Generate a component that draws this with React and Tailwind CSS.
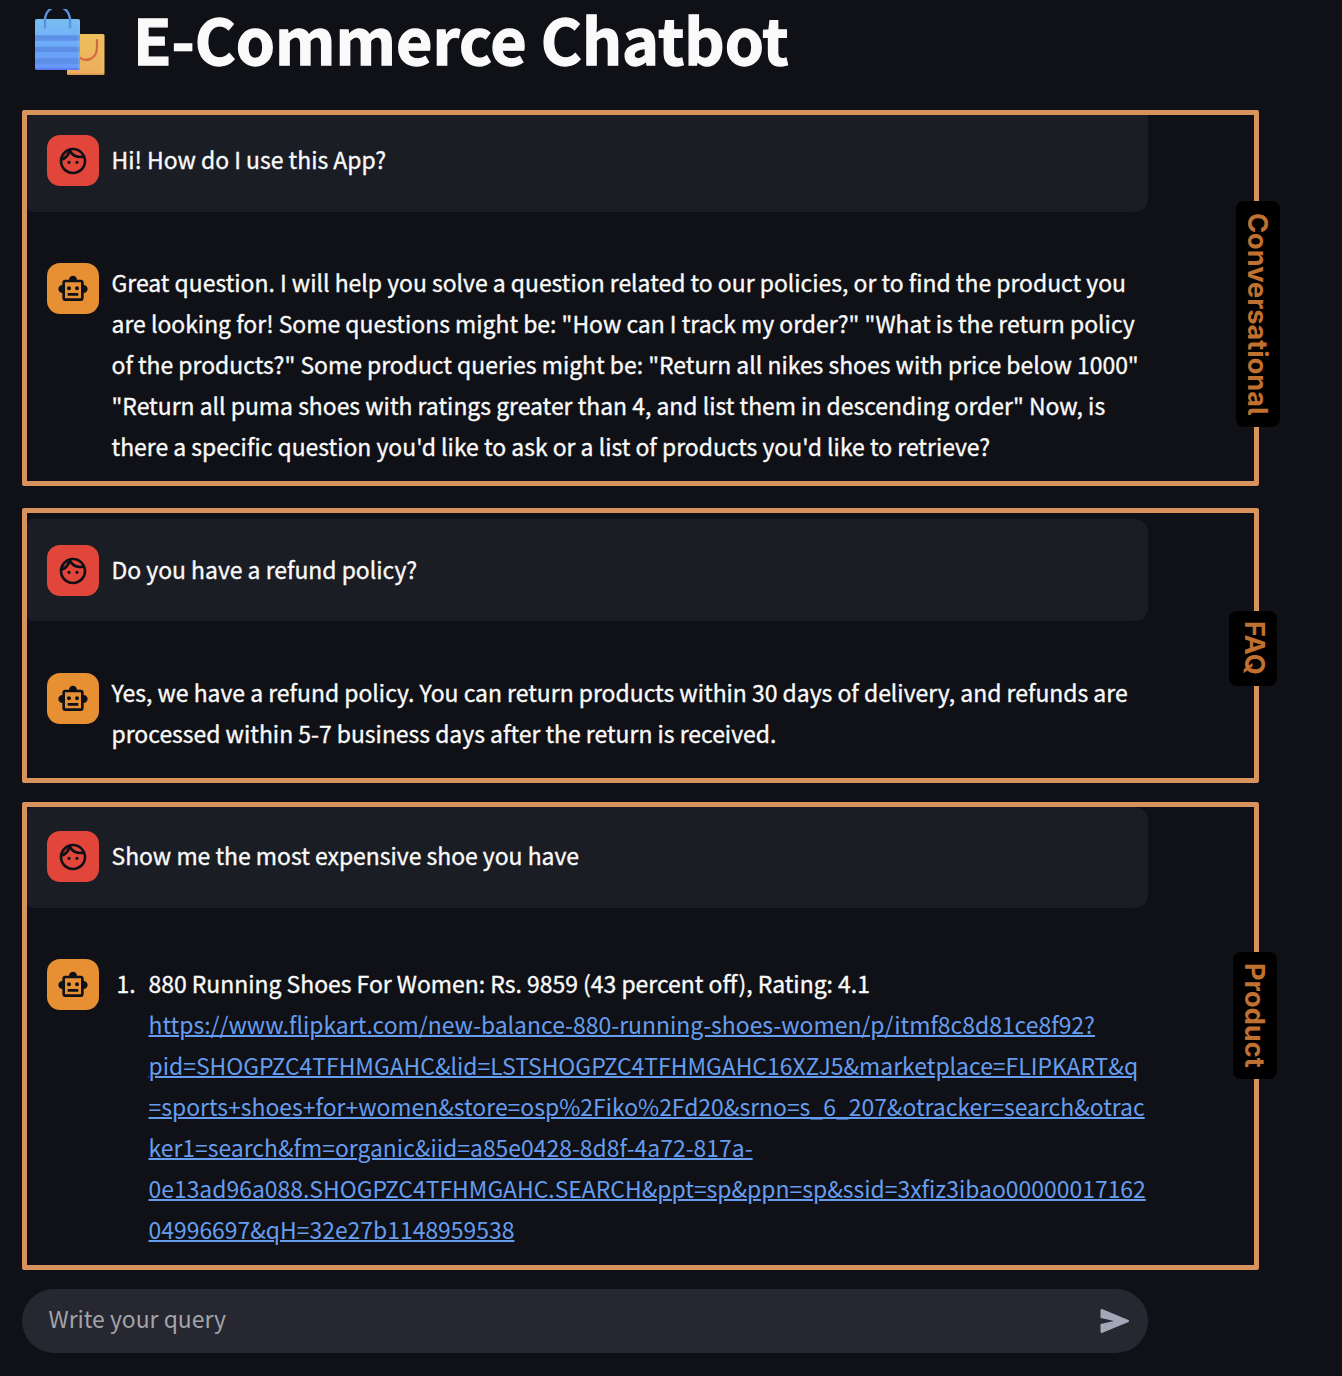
import { MdOutlineFace, MdOutlineSmartToy } from "react-icons/md";

function Line({ children }) {
  return <span className="block h-[41px] whitespace-nowrap">{children}</span>;
}

function Avatar({ bot }) {
  return (
    <div
      className={
        "flex h-[51px] w-[52px] shrink-0 items-center justify-center rounded-[13px] text-[#0e1117] " +
        (bot ? "bg-[#e78f33]" : "bg-[#e24539]")
      }
    >
      {bot ? <MdOutlineSmartToy size={32} /> : <MdOutlineFace size={32} />}
    </div>
  );
}

function UserMessage({ children, className }) {
  return (
    <div className={"flex w-[1121px] gap-[12.500px] bg-[#1a1d24] pl-5 " + className}>
      <Avatar />
      <div className="pt-1 [-webkit-text-stroke:0.35px_#fafafa]">{children}</div>
    </div>
  );
}

function BotMessage({ children, className }) {
  return (
    <div className={"flex gap-[12.500px] pl-5 " + className}>
      <Avatar bot />
      <div className="-mt-px [-webkit-text-stroke:0.35px_#fafafa]">{children}</div>
    </div>
  );
}

function Section({ label, className, labelClass, children }) {
  return (
    <section className={"relative ml-[22px] w-[1237px] rounded-[2px] border-[5px] border-[#d7935b] " + className}>
      {children}
      <div
        className={
          "absolute flex items-center justify-center rounded-lg bg-black font-['Inter'] leading-none font-bold text-[#c1712f] [font-feature-settings:'cv05'] [writing-mode:vertical-rl] " +
          labelClass
        }
      >
        {label}
      </div>
    </section>
  );
}

function Bags() {
  return (
    <svg width="72" height="68" viewBox="0 0 72 68" className="mt-[9px] ml-[34px] shrink-0">
      <defs>
        <linearGradient id="blue" x1="0" y1="0" x2="0" y2="1">
          <stop offset="0" stopColor="#77bdf0" />
          <stop offset=".4" stopColor="#70b0f8" />
          <stop offset="1" stopColor="#6595fa" />
        </linearGradient>
        <linearGradient id="gold" x1="0" y1="0" x2="0" y2="1">
          <stop offset="0" stopColor="#edc05b" />
          <stop offset="1" stopColor="#ecad5d" />
        </linearGradient>
      </defs>
      <rect x="33" y="25" width="37.5" height="41" rx="1.5" fill="url(#gold)" />
      <path d="M68.5 27V64" stroke="#f1ba66" strokeWidth="2" />
      <path d="M34 65.2H70" stroke="#d6954f" strokeWidth="1.2" />
      <path d="M63 31v7c0 14-13 15-18 10" fill="none" stroke="#d36744" strokeWidth="2.2" strokeLinecap="round" />
      <rect x="1" y="10" width="45" height="51" rx="1.8" fill="url(#blue)" />
      <path d="M1 29H46M1 40.5H46M1 52H46" stroke="#5d8fe6" strokeWidth="5.5" />
      <path d="M2 60H45" stroke="#5877ed" strokeWidth="1.6" />
      <path d="M44.8 12V59" stroke="#8bbdf8" strokeWidth="1.4" opacity=".6" />
      <path d="M11 18.500V10Q12 2 18 -1M36 18.500V10Q35 2 29 -1" fill="none" stroke="#5b94dc" strokeWidth="2.400" strokeLinecap="round" />
    </svg>
  );
}

export default function App() {
  return (
    <main className="h-[1376px] w-[1342px] bg-[#0f1116] font-['Noto_Sans_CJK_SC',sans-serif] text-[22.930px] leading-[41px] text-[#fafafa]">
      <header className="flex h-[110px]">
        <Bags />
        <h1 className="ml-[27px] text-[62.700px] leading-[75px] font-bold whitespace-nowrap [-webkit-text-stroke:1.3px_#fafafa]">
          E-Commerce Chatbot
        </h1>
      </header>

      <Section
        label="Conversational"
        className="h-[376px]"
        labelClass="top-[86px] left-[1209px] h-[226px] w-[44px] pr-[2px] text-[27.200px]"
      >
        <UserMessage className="h-[97px] rounded-br-[13px] rounded-bl-[5px] pt-5">
          <Line>Hi! How do I use this App?</Line>
        </UserMessage>
        <BotMessage className="mt-[51px]">
          <Line>Great question. I will help you solve a question related to our policies, or to find the product you</Line>
          <Line>are looking for! Some questions might be: "How can I track my order?" "What is the return policy</Line>
          <Line>of the products?" Some product queries might be: "Return all nikes shoes with price below 1000"</Line>
          <Line>"Return all puma shoes with ratings greater than 4, and list them in descending order" Now, is</Line>
          <Line>there a specific question you'd like to ask or a list of products you'd like to retrieve?</Line>
        </BotMessage>
      </Section>

      <Section
        label="FAQ"
        className="mt-[22px] h-[275px]"
        labelClass="top-[98px] left-[1202px] h-[75px] w-[48px] pb-[2px] pl-[2px] text-[27.200px]"
      >
        <UserMessage className="mt-[6px] h-[102px] rounded-l-[5px] rounded-r-[13px] pt-[26px]">
          <Line>Do you have a refund policy?</Line>
        </UserMessage>
        <BotMessage className="mt-[52px]">
          <Line>Yes, we have a refund policy. You can return products within 30 days of delivery, and refunds are</Line>
          <Line>processed within 5-7 business days after the return is received.</Line>
        </BotMessage>
      </Section>

      <Section
        label="Product"
        className="mt-[19px] h-[468px]"
        labelClass="top-[145px] left-[1206px] h-[127px] w-[44px] pr-[2px] text-[27.200px]"
      >
        <UserMessage className="h-[101px] rounded-l-[5px] rounded-r-[13px] pt-6">
          <Line>Show me the most expensive shoe you have</Line>
        </UserMessage>
        <BotMessage className="mt-[51px]">
          <div className="mt-[5px] flex">
            <div className="ml-[5px] w-[32px]">1.</div>
            <div>
              <Line>880 Running Shoes For Women: Rs. 9859 (43 percent off), Rating: 4.1</Line>
              <a className="text-[#669df0] underline decoration-2 [-webkit-text-stroke:0]">
                <Line>https://www.flipkart.com/new-balance-880-running-shoes-women/p/itmf8c8d81ce8f92?</Line>
                <Line>pid=SHOGPZC4TFHMGAHC&amp;lid=LSTSHOGPZC4TFHMGAHC16XZJ5&amp;marketplace=FLIPKART&amp;q</Line>
                <Line>=sports+shoes+for+women&amp;store=osp%2Fiko%2Fd20&amp;srno=s_6_207&amp;otracker=search&amp;otrac</Line>
                <Line>ker1=search&amp;fm=organic&amp;iid=a85e0428-8d8f-4a72-817a-</Line>
                <Line>0e13ad96a088.SHOGPZC4TFHMGAHC.SEARCH&amp;ppt=sp&amp;ppn=sp&amp;ssid=3xfiz3ibao00000017162</Line>
                <Line>04996697&amp;qH=32e27b1148959538</Line>
              </a>
            </div>
          </div>
        </BotMessage>
      </Section>

      <form className="mt-[19px] ml-[22px] flex h-[64px] w-[1126px] items-center justify-between rounded-full bg-[#262730] pr-[18px] pl-[26.500px]">
        <span className="pb-[5px] text-[#a3a4a8]">Write your query</span>
        <svg width="30" height="26" viewBox="0 0 30 26" fill="#a3a8b8">
          <path d="M.5 2.500Q.5.500 2.500 1.200L28.500 12Q30 13 28.500 14L2.500 24.800Q.5 25.500.5 23.500V16L14 13 .5 10Z" />
        </svg>
      </form>
    </main>
  );
}
